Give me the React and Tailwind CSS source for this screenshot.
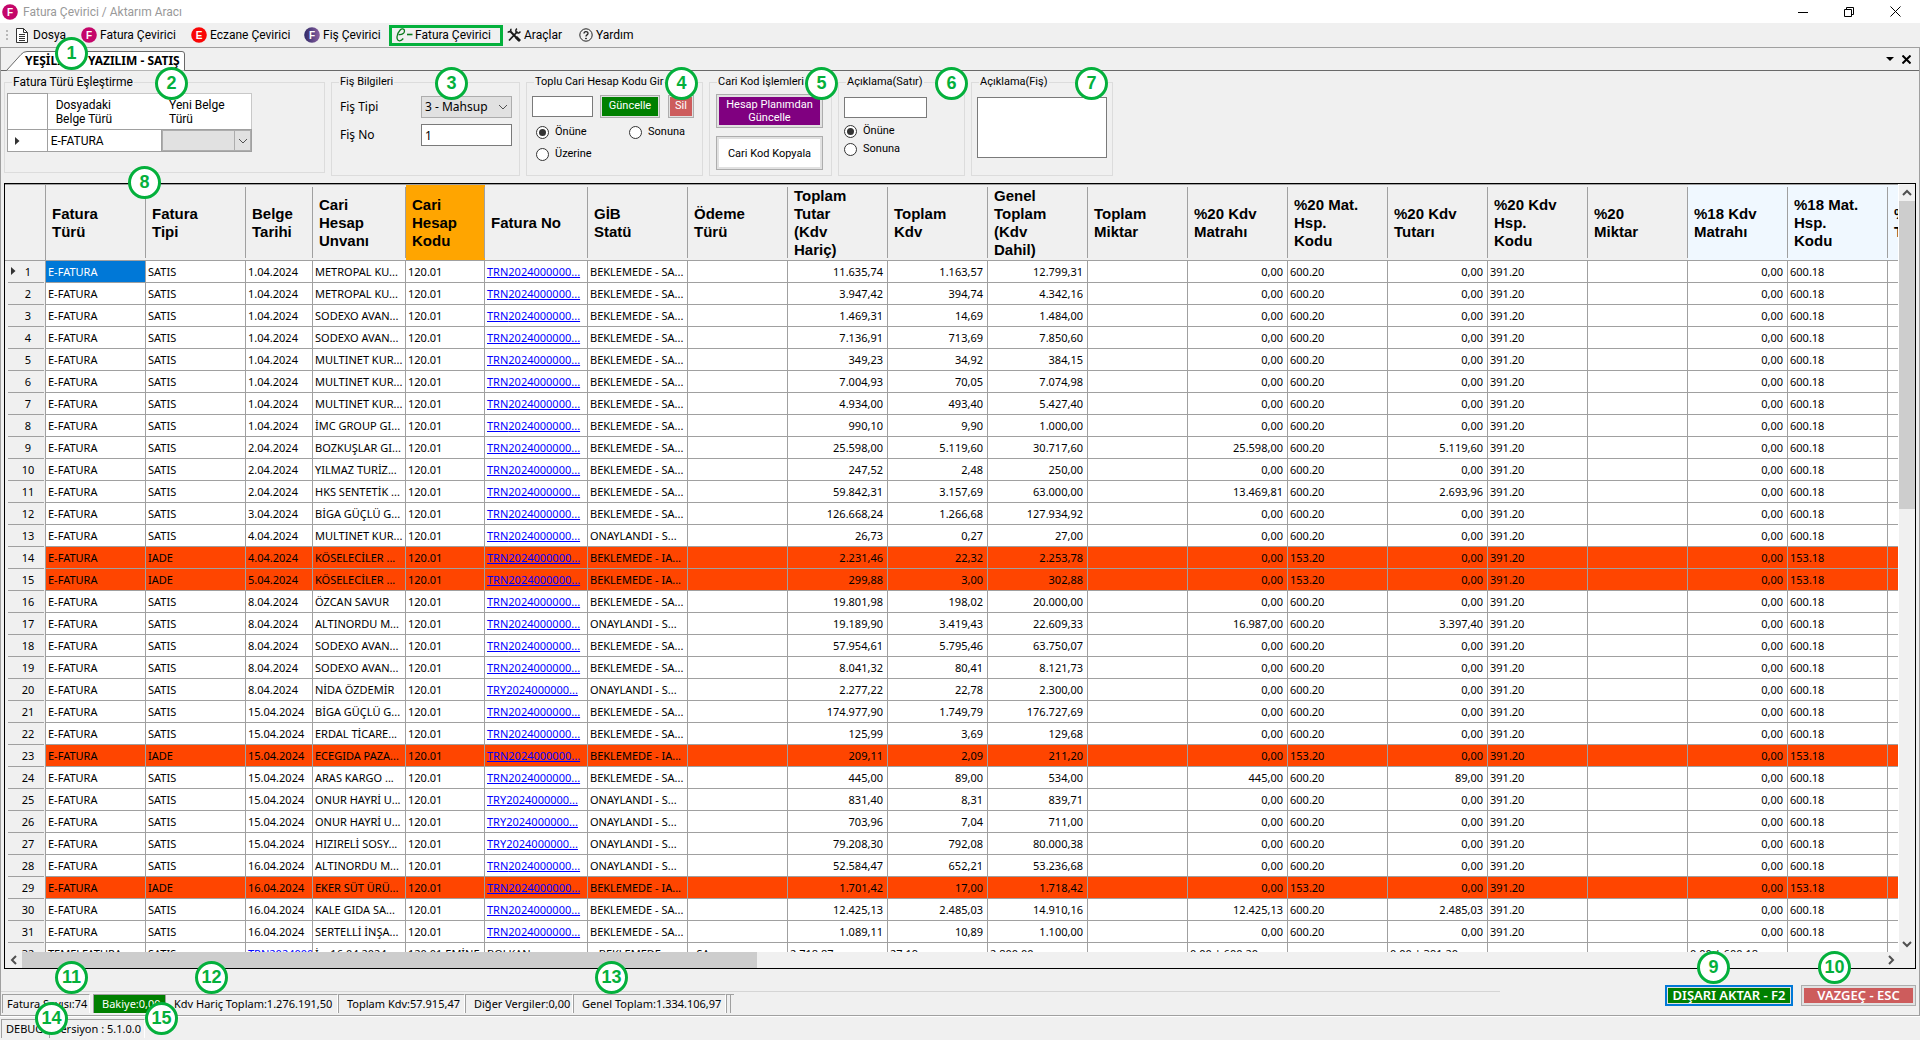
import React, { useState } from 'react';
import clsx from 'clsx';

const HEADERS = [
    { title: ['Fatura', 'Türü'], width: 'w-[100px]' },
    { title: ['Fatura', 'Tipi'], width: 'w-[100px]' },
    { title: ['Belge', 'Tarihi'], width: 'w-[67px]' },
    { title: ['Cari', 'Hesap', 'Unvanı'], width: 'w-[93px]' },
    { title: ['Cari', 'Hesap', 'Kodu'], width: 'w-[79px]', bg: 'bg-[#ffa500]' },
    { title: ['Fatura No'], width: 'w-[103px]' },
    { title: ['GİB', 'Statü'], width: 'w-[100px]' },
    { title: ['Ödeme', 'Türü'], width: 'w-[100px]' },
    { title: ['Toplam', 'Tutar', '(Kdv', 'Hariç)'], width: 'w-[100px]' },
    { title: ['Toplam', 'Kdv'], width: 'w-[100px]' },
    { title: ['Genel', 'Toplam', '(Kdv', 'Dahil)'], width: 'w-[100px]' },
    { title: ['Toplam', 'Miktar'], width: 'w-[100px]' },
    { title: ['%20 Kdv', 'Matrahı'], width: 'w-[100px]' },
    { title: ['%20 Mat.', 'Hsp.', 'Kodu'], width: 'w-[100px]' },
    { title: ['%20 Kdv', 'Tutarı'], width: 'w-[100px]' },
    { title: ['%20 Kdv', 'Hsp.', 'Kodu'], width: 'w-[100px]' },
    { title: ['%20', 'Miktar'], width: 'w-[100px]' },
    { title: ['%18 Kdv', 'Matrahı'], width: 'w-[100px]', bg: 'bg-[#f0f8ff]' },
    { title: ['%18 Mat.', 'Hsp.', 'Kodu'], width: 'w-[100px]', bg: 'bg-[#f0f8ff]' },
    { title: ['%18 Kdv', 'Tutarı'], width: 'w-[100px]', bg: 'bg-[#f0f8ff]' },
];

// date, customer, serial, status, net, vat, total, vat base 20, vat 20
const INVOICES = [
    ['1.04.2024', 'METROPAL KU...', 'TRN', 'BEKLEMEDE - SA...', '11.635,74', '1.163,57', '12.799,31'],
    ['1.04.2024', 'METROPAL KU...', 'TRN', 'BEKLEMEDE - SA...', '3.947,42', '394,74', '4.342,16'],
    ['1.04.2024', 'SODEXO AVAN...', 'TRN', 'BEKLEMEDE - SA...', '1.469,31', '14,69', '1.484,00'],
    ['1.04.2024', 'SODEXO AVAN...', 'TRN', 'BEKLEMEDE - SA...', '7.136,91', '713,69', '7.850,60'],
    ['1.04.2024', 'MULTINET KUR...', 'TRN', 'BEKLEMEDE - SA...', '349,23', '34,92', '384,15'],
    ['1.04.2024', 'MULTINET KUR...', 'TRN', 'BEKLEMEDE - SA...', '7.004,93', '70,05', '7.074,98'],
    ['1.04.2024', 'MULTINET KUR...', 'TRN', 'BEKLEMEDE - SA...', '4.934,00', '493,40', '5.427,40'],
    ['1.04.2024', 'İMC GROUP GI...', 'TRN', 'BEKLEMEDE - SA...', '990,10', '9,90', '1.000,00'],
    ['2.04.2024', 'BOZKUŞLAR GI...', 'TRN', 'BEKLEMEDE - SA...', '25.598,00', '5.119,60', '30.717,60', '25.598,00', '5.119,60'],
    ['2.04.2024', 'YILMAZ TURİZ...', 'TRN', 'BEKLEMEDE - SA...', '247,52', '2,48', '250,00'],
    ['2.04.2024', 'HKS SENTETİK ...', 'TRN', 'BEKLEMEDE - SA...', '59.842,31', '3.157,69', '63.000,00', '13.469,81', '2.693,96'],
    ['3.04.2024', 'BİGA GÜÇLÜ G...', 'TRN', 'BEKLEMEDE - SA...', '126.668,24', '1.266,68', '127.934,92'],
    ['4.04.2024', 'MULTINET KUR...', 'TRN', 'ONAYLANDI - S...', '26,73', '0,27', '27,00'],
    ['4.04.2024', 'KÖSELECİLER ...', 'TRN', 'BEKLEMEDE - IA...', '2.231,46', '22,32', '2.253,78'],
    ['5.04.2024', 'KÖSELECİLER ...', 'TRN', 'BEKLEMEDE - IA...', '299,88', '3,00', '302,88'],
    ['8.04.2024', 'ÖZCAN SAVUR', 'TRN', 'BEKLEMEDE - SA...', '19.801,98', '198,02', '20.000,00'],
    ['8.04.2024', 'ALTINORDU M...', 'TRN', 'ONAYLANDI - S...', '19.189,90', '3.419,43', '22.609,33', '16.987,00', '3.397,40'],
    ['8.04.2024', 'SODEXO AVAN...', 'TRN', 'BEKLEMEDE - SA...', '57.954,61', '5.795,46', '63.750,07'],
    ['8.04.2024', 'SODEXO AVAN...', 'TRN', 'BEKLEMEDE - SA...', '8.041,32', '80,41', '8.121,73'],
    ['8.04.2024', 'NİDA ÖZDEMİR', 'TRY', 'ONAYLANDI - S...', '2.277,22', '22,78', '2.300,00'],
    ['15.04.2024', 'BİGA GÜÇLÜ G...', 'TRN', 'BEKLEMEDE - SA...', '174.977,90', '1.749,79', '176.727,69'],
    ['15.04.2024', 'ERDAL TİCARE...', 'TRN', 'BEKLEMEDE - SA...', '125,99', '3,69', '129,68'],
    ['15.04.2024', 'ECEGIDA PAZA...', 'TRN', 'BEKLEMEDE - IA...', '209,11', '2,09', '211,20'],
    ['15.04.2024', 'ARAS KARGO ...', 'TRN', 'BEKLEMEDE - SA...', '445,00', '89,00', '534,00', '445,00', '89,00'],
    ['15.04.2024', 'ONUR HAYRİ U...', 'TRY', 'ONAYLANDI - S...', '831,40', '8,31', '839,71'],
    ['15.04.2024', 'ONUR HAYRİ U...', 'TRY', 'ONAYLANDI - S...', '703,96', '7,04', '711,00'],
    ['15.04.2024', 'HIZIRELİ SOSY...', 'TRY', 'ONAYLANDI - S...', '79.208,30', '792,08', '80.000,38'],
    ['16.04.2024', 'ALTINORDU M...', 'TRN', 'ONAYLANDI - S...', '52.584,47', '652,21', '53.236,68'],
    ['16.04.2024', 'EKER SÜT ÜRÜ...', 'TRN', 'BEKLEMEDE - IA...', '1.701,42', '17,00', '1.718,42'],
    ['16.04.2024', 'KALE GIDA SA...', 'TRN', 'BEKLEMEDE - SA...', '12.425,13', '2.485,03', '14.910,16', '12.425,13', '2.485,03'],
    ['16.04.2024', 'SERTELLİ İNŞA...', 'TRN', 'BEKLEMEDE - SA...', '1.089,11', '10,89', '1.100,00'],
];

// The row cut by the scroll bar, its cells run on over the column lines
const LAST_ROW = [
    'TEMELFATURA', 'SATIS', <a href="#fatura" className="text-[#0000ff] underline">TRN20240000</a>, 'İ .. 16.04.2024', '120.01 EMİNE', 'BOLKAN', '.. BEKLEMEDE',
    '- SA...', '2.718,87', '27,19', '2.800,00', '', '0,00 | 600.20', '', '0,00 | 391.20', '', '', '0,00 | 600.18', '', '',
];

const RIGHT_ALIGNED = [8, 9, 10, 12, 14, 17];

const BADGES = [
    { no: 1, place: 'left-[55px] top-[37px]' },
    { no: 2, place: 'left-[155px] top-[67px]' },
    { no: 3, place: 'left-[435px] top-[67px]' },
    { no: 4, place: 'left-[665px] top-[67px]' },
    { no: 5, place: 'left-[805px] top-[67px]' },
    { no: 6, place: 'left-[935px] top-[67px]' },
    { no: 7, place: 'left-[1075px] top-[67px]' },
    { no: 8, place: 'left-[128px] top-[166px]' },
    { no: 9, place: 'right-[190px] bottom-[56px]' },
    { no: 10, place: 'right-[69px] bottom-[56px]' },
    { no: 11, place: 'left-[55px] bottom-[46px]' },
    { no: 12, place: 'left-[195px] bottom-[46px]' },
    { no: 13, place: 'left-[595px] bottom-[46px]' },
    { no: 14, place: 'left-[35px] bottom-[5px]' },
    { no: 15, place: 'left-[145px] bottom-[5px]' },
];

const LetterIcon = ({ letter, color }) => (
    <svg width="16" height="16" viewBox="0 0 16 16" className="shrink-0">
        <defs>
            <linearGradient id="fis" x1="0" x2="1" y1="0" y2="0">
                <stop offset="0" stopColor="#2f2a68" />
                <stop offset="1" stopColor="#8a5fa0" />
            </linearGradient>
        </defs>
        <circle cx="8" cy="8" r="7.8" fill={color} />
        <text x="8" y="11.6" textAnchor="middle" fontSize="10" fontWeight="700" fontFamily="Liberation Sans, sans-serif" fill="#fff">{letter}</text>
    </svg>
);

const DocIcon = () => (
    <svg width="12" height="15" viewBox="0 0 12 15" fill="none" stroke="#333" className="shrink-0">
        <path d="M.5.5h7l4 4v10H.5z" fill="#fff" />
        <path d="M7.5.5v4h4M3 6.5h6M3 8.5h6M3 10.5h6M3 12.5h6" />
    </svg>
);

const EIcon = () => (
    <svg width="17" height="14" viewBox="0 0 17 14" fill="none" stroke="#0b7a1c" className="shrink-0">
        <path d="M2.5 6.5c3 .6 6-1 6-3.600C8.500.7 5.800.2 4 2.200 1.600 4.800.6 8.600 1.300 11.200c.6 2.300 3.700 2.200 6-.7" strokeWidth="1.300" />
        <path d="M11 6.500h5.500" strokeWidth="1.600" />
    </svg>
);

const ToolsIcon = () => (
    <svg width="14" height="14" viewBox="0 0 14 14" fill="none" stroke="#1a1a1a" className="shrink-0">
        <path d="M3.500 3.500l8.500 9" strokeWidth="2" />
        <path d="M10.500 3.500l-8.500 9" strokeWidth="1.800" />
        <path d="M3.700.8a2.300 2.300 0 0 1-3 3M13.300 3.500a2.300 2.300 0 1 1-3.300-2.800" strokeWidth="1.500" />
        <path d="M9 9l4 4" strokeWidth="2.800" />
    </svg>
);

const HelpIcon = () => (
    <svg width="14" height="14" viewBox="0 0 14 14" fill="none" stroke="#222" className="shrink-0">
        <circle cx="7" cy="7" r="6.200" />
        <path d="M5 5.600c0-2.600 4-2.600 4-.2C9 7 7 6.800 7 8.600" strokeWidth="1.300" />
        <circle cx="7" cy="10.500" r=".5" fill="#222" />
    </svg>
);

const Chevron = ({ className, rotate = 0, bold }) => (
    <svg width="10" height="10" viewBox="0 0 10 10" fill="none" stroke="#505050" strokeWidth={bold ? 2 : 1} className={className}>
        <path d="M1 3l4 4 4-4" transform={`rotate(${rotate} 5 5)`} />
    </svg>
);

const Group = ({ title, className, legendSize = 'text-[11px]', children }) => (
    <fieldset className={clsx('border border-[#dcdcdc]', className)}>
        <legend className={clsx('ml-[7px] px-px leading-[14px]', legendSize)}>{title}</legend>
        {children}
    </fieldset>
);

const Radio = ({ name, label, defaultChecked }) => (
    <label className="flex h-[18px] items-center gap-[6px] text-[11px]">
        <input
            type="radio"
            name={name}
            defaultChecked={defaultChecked}
            className="flex size-[13px] appearance-none items-center justify-center rounded-full border border-[#333] bg-white checked:before:size-[7px] checked:before:rounded-full checked:before:bg-[#333] checked:before:content-['']"
        />
        {label}
    </label>
);

const MenuBar = () => (
    <nav className="flex h-6 items-center pl-[6px] font-['Roboto',sans-serif] text-[12px]">
        <div className="mr-2 flex flex-col gap-[2px]">
            <i className="size-[2px] bg-[#b8b8b8]" />
            <i className="size-[2px] bg-[#b8b8b8]" />
            <i className="size-[2px] bg-[#b8b8b8]" />
        </div>
        <button className="flex w-[65px] items-center gap-[5px]"><DocIcon />Dosya</button>
        <button className="flex w-[110px] items-center gap-[3px]"><LetterIcon letter="F" color="#c4066a" />Fatura Çevirici</button>
        <button className="flex w-[113px] items-center gap-[3px]"><LetterIcon letter="E" color="#f90606" />Eczane Çevirici</button>
        <button className="flex w-[85px] items-center gap-[3px]"><LetterIcon letter="F" color="url(#fis)" />Fiş Çevirici</button>
        <button className="flex h-[21px] w-[114px] items-center gap-[2px] border-[3px] border-[#04b03c] pl-1"><EIcon />Fatura Çevirici</button>
        <button className="ml-1 flex w-[72px] items-center gap-[3px]"><ToolsIcon />Araçlar</button>
        <button className="flex items-center gap-[3px]"><HelpIcon />Yardım</button>
    </nav>
);

const MatchTable = () => (
    <table className="ml-[2px] mt-1 w-[245px] table-fixed border-collapse bg-white text-left text-[12px] leading-[14px]">
        <thead>
            <tr className="h-[36px]">
                <th className="w-8 border border-[#a0a0a0]" />
                <th className="w-[92px] border-y border-[#a0a0a0] border-t-[#c8c8c8] pl-2 font-normal">Dosyadaki<br />Belge Türü</th>
                <th className="w-[73px] border-y border-r border-[#a0a0a0] border-t-[#c8c8c8] border-r-[#c8c8c8] pl-2 font-normal">Yeni Belge<br />Türü</th>
            </tr>
        </thead>
        <tbody>
            <tr className="h-[22px]">
                <td className="border border-[#a0a0a0] pl-[7px]">
                    <svg width="5" height="8" viewBox="0 0 5 8"><path d="M0 0l4.500 4-4.500 4z" fill="#333" /></svg>
                </td>
                <td className="border border-[#a0a0a0] pl-[3px]">E-FATURA</td>
                <td className="border border-[#a0a0a0] p-0">
                    <div className="relative h-[21px] bg-[#e1e1e1]">
                        <select aria-label="Yeni Belge Türü" className="size-full appearance-none border border-[#adadad]">
                            <option value=""></option>
                        </select>
                        <span className="pointer-events-none absolute inset-y-0 right-0 flex w-[17px] items-center justify-center border-l border-[#adadad]">
                            <Chevron />
                        </span>
                    </div>
                </td>
            </tr>
        </tbody>
    </table>
);

const Toolbar = () => (
    <div className="flex h-[112px] items-start gap-[6px] pl-[3px] pt-1 font-['Roboto',sans-serif]">
        <Group title="Fatura Türü Eşleştirme" legendSize="text-[12px]" className="h-[98px] w-[321px]">
            <MatchTable />
        </Group>
        <Group title="Fiş Bilgileri" className="h-[101px] w-[189px]">
            <div className="mt-[7px] grid grid-cols-[81px_91px] items-center gap-y-[6px] pl-2 font-['Noto_Sans',sans-serif] text-[12px]">
                <label htmlFor="fis-tipi">Fiş Tipi</label>
                <div className="relative">
                    <select id="fis-tipi" className="h-[22px] w-full appearance-none border border-[#adadad] bg-[#e1e1e1] pl-[3px]">
                        <option>3 - Mahsup</option>
                    </select>
                    <Chevron className="pointer-events-none absolute right-1 top-[6px]" />
                </div>
                <label htmlFor="fis-no">Fiş No</label>
                <input id="fis-no" defaultValue="1" className="h-[22px] w-full border border-[#7a7a7a] bg-white pl-[3px]" />
            </div>
        </Group>
        <Group title="Toplu Cari Hesap Kodu Gir" className="h-[101px] w-[177px]">
            <div className="mt-[6px] flex items-center pl-[5px] text-[11px] text-white">
                <input aria-label="Cari Hesap Kodu" className="h-[21px] w-[61px] border border-[#7a7a7a] bg-white px-1 text-black" />
                <button className="ml-[7px] h-[23px] w-[60px] border border-[#adadad] bg-[#e1e1e1] p-px">
                    <span className="flex size-full items-center justify-center bg-[#008000]">Güncelle</span>
                </button>
                <button className="ml-2 h-[23px] w-[26px] border border-[#adadad] bg-[#e1e1e1] p-px">
                    <span className="flex size-full items-center justify-center bg-[#cd5c5c]">Sil</span>
                </button>
            </div>
            <div className="mt-[5px] grid grid-cols-[93px_auto] gap-y-1 pl-[9px]">
                <Radio name="toplu" label="Önüne" defaultChecked />
                <Radio name="toplu" label="Sonuna" />
                <Radio name="toplu" label="Üzerine" />
            </div>
        </Group>
        <Group title="Cari Kod İşlemleri" className="h-[101px] w-[123px]">
            <div className="mt-[5px] flex flex-col gap-2 pl-[6px] text-[11px] leading-[13px]">
                <button className="h-[34px] w-[107px] border border-[#adadad] bg-[#e1e1e1] p-[2px] text-white">
                    <span className="flex size-full items-center justify-center bg-[#800080]">Hesap Planımdan<br />Güncelle</span>
                </button>
                <button className="h-[34px] w-[107px] border border-[#adadad] bg-[#e1e1e1] p-[2px]">
                    <span className="flex size-full items-center justify-center bg-white">Cari Kod Kopyala</span>
                </button>
            </div>
        </Group>
        <Group title="Açıklama(Satır)" className="h-[101px] w-[127px]">
            <div className="mt-2 pl-[5px]">
                <input aria-label="Açıklama(Satır)" className="block h-[21px] w-[83px] border border-[#7a7a7a] bg-white px-1 text-[11px]" />
                <div className="mt-1">
                    <Radio name="satir" label="Önüne" defaultChecked />
                    <Radio name="satir" label="Sonuna" />
                </div>
            </div>
        </Group>
        <Group title="Açıklama(Fiş)" className="h-[101px] w-[142px]">
            <textarea aria-label="Açıklama(Fiş)" className="ml-[5px] mt-2 block h-[61px] w-[130px] resize-none border border-[#7a7a7a] bg-white p-1 text-[11px]" />
        </Group>
    </div>
);

const toCells = ([date, customer, serial, status, net, vat, total, base = '0,00', vat20 = '0,00'], isReturn) => {
    const code = isReturn ? '153' : '600';
    return [
        'E-FATURA', isReturn ? 'IADE' : 'SATIS', date, customer, '120.01',
        <a href="#fatura" className="text-[#0000ff] underline">{serial}2024000000...</a>,
        status, '', net, vat, total, '', base, `${code}.20`, vat20, '391.20', '', '0,00', `${code}.18`, '',
    ];
};

const InvoiceRow = ({ cells, index, isReturn, selected, leftOnly, onSelect }) => (
    <tr className={isReturn ? 'bg-[#ff4500]' : 'bg-white'}>
        <th className="h-[22px] border-r border-[#a0a0a0] bg-[#f0f0f0] p-0 font-normal">
            <div className="relative ml-[3px] mr-px h-[22px] border-b border-[#a0a0a0] pl-1 text-center leading-[21px]">
                {selected && (
                    <svg width="5" height="8" viewBox="0 0 5 8" className="absolute left-[3px] top-[6px]"><path d="M0 0l4.500 4-4.500 4z" fill="#333" /></svg>
                )}
                {index + 1}
            </div>
        </th>
        {cells.map((cell, i) => (
            <td
                key={i}
                onClick={onSelect}
                className={clsx(
                    'h-[22px] overflow-hidden whitespace-nowrap border-b border-r border-[#a0a0a0] py-0',
                    RIGHT_ALIGNED.includes(i) && !leftOnly ? 'pr-1 text-right' : 'pl-[2px]',
                    selected && i === 0 && 'bg-[#0078d7] text-white'
                )}
            >
                {cell}
            </td>
        ))}
    </tr>
);

const InvoiceGrid = () => {
    const [selected, setSelected] = useState(0);

    return (
        <div className="mx-[3px] flex min-h-0 flex-1 flex-col border border-black bg-[#f0f0f0]">
            <div className="flex min-h-0 flex-1">
                <div className="min-w-0 flex-1 overflow-hidden border-r border-white">
                    <table className="w-[1983px] table-fixed border-separate border-spacing-0 text-[11px] leading-[15px]">
                        <thead>
                            <tr className="text-left font-['Liberation_Sans',Arial,sans-serif] text-[15px] leading-[18px]">
                                <th className="h-[77px] w-[41px] border-y border-r border-[#a0a0a0]" />
                                {HEADERS.map((h, i) => (
                                    <th key={i} className={clsx('h-[77px] border-y border-[#a0a0a0] p-0 font-bold', h.width, h.bg)}>
                                        <div className="flex h-[71px] flex-col justify-center whitespace-nowrap border-r border-[#a0a0a0] pl-[6px]">
                                            {h.title.map((line) => <span key={line}>{line}</span>)}
                                        </div>
                                    </th>
                                ))}
                            </tr>
                        </thead>
                        <tbody>
                            {INVOICES.map((invoice, i) => {
                                const isReturn = invoice[3].endsWith('IA...');
                                return (
                                    <InvoiceRow
                                        key={i}
                                        cells={toCells(invoice, isReturn)}
                                        index={i}
                                        isReturn={isReturn}
                                        selected={i === selected}
                                        onSelect={() => setSelected(i)}
                                    />
                                );
                            })}
                            <InvoiceRow cells={LAST_ROW} index={INVOICES.length} leftOnly />
                        </tbody>
                    </table>
                </div>
                {/* Vertical scroll bar */}
                <div className="flex w-4 flex-col items-center">
                    <div className="flex h-[17px] items-center"><Chevron rotate={180} bold /></div>
                    <div className="w-full flex-1">
                        <div className="h-[42%] bg-[#cdcdcd]" />
                    </div>
                    <div className="flex h-[17px] items-center"><Chevron bold /></div>
                </div>
            </div>
            {/* Horizontal scroll bar */}
            <div className="flex h-4 items-center pr-4">
                <div className="flex w-[17px] justify-center"><Chevron rotate={90} bold /></div>
                <div className="h-full flex-1">
                    <div className="h-full w-[39.5%] bg-[#cdcdcd]" />
                </div>
                <div className="flex w-[17px] justify-center"><Chevron rotate={270} bold /></div>
            </div>
        </div>
    );
};

const StatusCell = ({ className, children }) => (
    <span className={clsx('flex h-[19px] items-center whitespace-nowrap border-l border-t border-[#a0a0a0]', className)}>{children}</span>
);

const Footer = () => (
    <div className="flex h-[46px] items-start justify-between">
        <div className="mt-[22px] w-[1499px] border-t border-[#d5d5d5] pt-[2px]">
            <div className="flex">
                <StatusCell className="ml-px w-[88px] border-r border-r-white pl-1">Fatura Sayısı:74</StatusCell>
                <StatusCell className="ml-[3px] w-[72px] bg-[#008000] pl-2 text-white">Bakiye:0,00</StatusCell>
                <StatusCell className="w-[173px] border-r border-r-white pl-2">Kdv Hariç Toplam:1.276.191,50</StatusCell>
                <StatusCell className="w-[127px] border-r border-r-white pl-2">Toplam Kdv:57.915,47</StatusCell>
                <StatusCell className="w-[108px] border-r border-r-white pl-2">Diğer Vergiler:0,00</StatusCell>
                <StatusCell className="w-[153px] border-r border-r-white pl-2">Genel Toplam:1.334.106,97</StatusCell>
                <StatusCell className="w-1" />
                <StatusCell className="w-1" />
            </div>
        </div>
        <div className="mr-[3px] mt-4 flex gap-2 text-[13px] font-semibold text-white">
            <button className="h-[21px] w-[128px] border-2 border-[#0078d7] bg-[#e1e1e1] p-px">
                <span className="flex size-full items-center justify-center whitespace-nowrap bg-[#008000]">DIŞARI AKTAR - F2</span>
            </button>
            <button className="h-[21px] w-[115px] border border-[#adadad] bg-[#e1e1e1] p-[2px]">
                <span className="flex size-full items-center justify-center whitespace-nowrap bg-[#cd5c5c]">VAZGEÇ - ESC</span>
            </button>
        </div>
    </div>
);

const App = () => (
    <div className="relative flex h-screen flex-col overflow-hidden bg-[#f0f0f0] font-['Noto_Sans',Tahoma,sans-serif] text-[11px] text-black">
        <header className="flex h-[23px] items-center bg-white pl-[2px] font-['Roboto',sans-serif] text-[12px] text-[#999]">
            <LetterIcon letter="F" color="#c4066a" />
            <h1 className="ml-[5px]">Fatura Çevirici / Aktarım Aracı</h1>
            <div className="ml-auto flex items-center pr-[2px]">
                <button aria-label="Küçült" className="flex w-[46px] justify-center">
                    <svg width="10" height="10" stroke="#000"><path d="M0 5.500h10" /></svg>
                </button>
                <button aria-label="Önceki boyut" className="flex w-[46px] justify-center">
                    <svg width="10" height="10" fill="none" stroke="#000"><path d="M.5 2.500h7v7h-7zM2.500 2.500v-2h7v7h-2" /></svg>
                </button>
                <button aria-label="Kapat" className="flex w-[46px] justify-center">
                    <svg width="11" height="11" stroke="#000"><path d="M.5.5l10 10M10.500.5l-10 10" /></svg>
                </button>
            </div>
        </header>
        <MenuBar />

        <main className="flex min-h-0 flex-1 flex-col border border-[#a0a0a0]">
            <div className="flex h-[23px] items-end justify-between border-b border-[#696969]">
                <div className="relative -mb-px ml-[5px] h-5 w-[179px]">
                    <svg width="179" height="20" className="absolute inset-0" fill="#fff" stroke="#696969">
                        <path d="M.5 19.500L15 3.500q2.500-3 6-3h155q2.500 0 2.500 2.500v16.500" />
                    </svg>
                    <button className="relative flex h-full w-full gap-[26px] pl-[19px] text-[12px] font-bold leading-[19px]">
                        <span>YEŞİLI</span>
                        <span className="whitespace-nowrap">YAZILIM - SATIŞ</span>
                    </button>
                </div>
                <div className="flex items-center gap-2 self-center pr-2">
                    <button aria-label="Sekmeler"><svg width="8" height="4"><path d="M0 0h8L4 4z" /></svg></button>
                    <button aria-label="Sekmeyi kapat"><svg width="9" height="9" stroke="#000" strokeWidth="2"><path d="M.5.5l8 8M8.500.5l-8 8" /></svg></button>
                </div>
            </div>
            <Toolbar />
            <InvoiceGrid />
            <Footer />
        </main>

        <footer className="flex h-6 items-center border-t border-white">
            <StatusCell className="ml-px w-12 pl-1">DEBUG</StatusCell>
            <StatusCell className="w-24 border-r border-r-white pl-1">Versiyon : 5.1.0.0</StatusCell>
        </footer>

        {BADGES.map((badge) => (
            <span
                key={badge.no}
                className={clsx(
                    "absolute flex size-[33px] items-center justify-center rounded-full border-[3px] border-[#04b03c] bg-white font-['Liberation_Sans',Arial,sans-serif] text-[18px] font-bold text-[#04b03c]",
                    badge.place
                )}
            >
                {badge.no}
            </span>
        ))}
    </div>
);

export default App;
